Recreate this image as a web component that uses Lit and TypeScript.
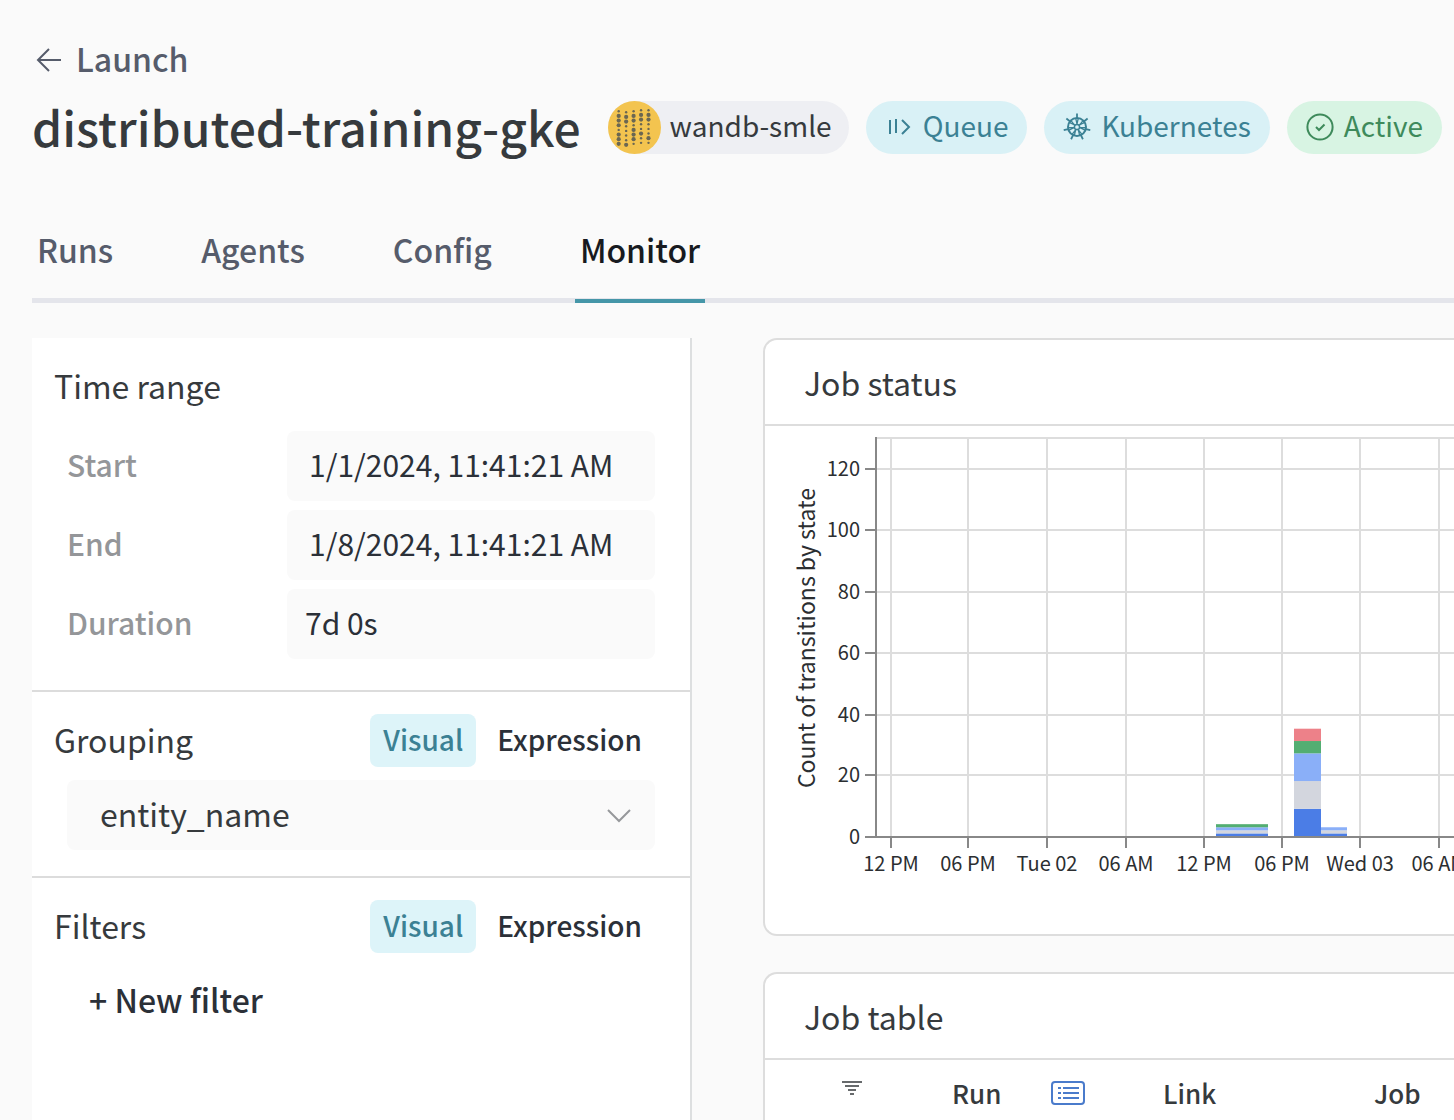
import { LitElement, html, svg, css } from "lit";
import { customElement, property, state } from "lit/decorators.js";
import { classMap } from "lit/directives/class-map.js";

const fontStack = css`"Noto Sans CJK SC", "Noto Sans", sans-serif`;

const backIcon = svg`<svg width="26" height="26" viewBox="0 0 26 26" fill="none" stroke="currentColor" stroke-width="2" aria-hidden="true"><path d="M25 13H2M13 2L2 13l11 11"/></svg>`;

const queueIcon = svg`<svg width="28" height="28" viewBox="0 0 28 28" fill="none" stroke="currentColor" stroke-width="2" aria-hidden="true"><path d="M5 7v14M11 6v14M17 7l7 7-7 7"/></svg>`;

const checkIcon = svg`<svg width="28" height="28" viewBox="0 0 28 28" fill="none" stroke="currentColor" stroke-width="2" aria-hidden="true"><circle cx="14" cy="14" r="12.600"/><path d="M10 14l3 3 5.500-5.500"/></svg>`;

const polar = (r: number, turn: number) => {
  const a = (turn * 2 * Math.PI) / 7 - Math.PI / 2;
  return `${(14 + r * Math.cos(a)).toFixed(2)} ${(14 + r * Math.sin(a)).toFixed(2)}`;
};
const seven = [0, 1, 2, 3, 4, 5, 6];
const helmIcon = svg`<svg width="28" height="28" viewBox="0 0 28 28" fill="none" stroke="currentColor" aria-hidden="true">
  <circle cx="14" cy="14" r="9" stroke-width="2"/>
  <circle cx="14" cy="14" r="2.600" stroke-width="1.500"/>
  ${seven.map((i) => svg`<path stroke-width="1.800" d="M${polar(8, i)}L${polar(13.6, i)}"/><path stroke-width="1.300" d="M${polar(8.5, i - 0.16)}Q${polar(5, i - 0.08)} ${polar(2.8, i)}Q${polar(5, i + 0.08)} ${polar(8.5, i + 0.16)}"/>`)}
</svg>`;

/* Dot sizes of the avatar, one string per column: 2 = large, 1 = small. */
const dotColumns = [
  { top: 10.3, dots: "12221222" },
  { top: 11.3, dots: "12211112" },
  { top: 10.3, dots: "12212221" },
  { top: 9.3, dots: "12211211" },
  { top: 9.3, dots: "12211121" },
];
const avatar = svg`<svg width="53" height="53" viewBox="0 0 53 53" aria-hidden="true">
  <circle cx="26.500" cy="26.500" r="26.500" fill="#f3c44f"/>
  ${dotColumns.map((c, x) =>
    [...c.dots].map((d, y) => svg`<circle cx=${10.7 + x * 7.45} cy=${c.top + y * 4.65} r=${d === "2" ? 2.1 : 1.2} fill="#6b6752"/>`),
  )}
</svg>`;

const filterIcon = svg`<svg width="22" height="16" viewBox="0 0 22 16" fill="none" stroke="currentColor" stroke-width="1.600" aria-hidden="true"><path d="M1 2h20M4 6h14M7 10h8M9 14h4"/></svg>`;

const listIcon = svg`<svg width="34" height="26" viewBox="0 0 34 26" fill="none" stroke="#4a7bcb" stroke-width="2" aria-hidden="true"><rect x="1" y="2" width="32" height="22" rx="3"/><path stroke-width="1.800" d="M7 8h3M12 8h16M7 13h3M12 13h16M7 18h3M12 18h16"/></svg>`;

@customElement("status-chart")
class StatusChart extends LitElement {
  static styles = css`
    :host { display: block; overflow: hidden; }
    .plot { display: block; font-family: ${fontStack}; font-size: 20px; }
    .grid { stroke: #dddddd; stroke-width: 2; }
    .axis { stroke: #888888; stroke-width: 2; }
    .label { fill: #2b2e31; }
    .axis-title { fill: #2b2e31; font-size: 23px; }
  `;

  private xTicks: [number, string][] = [
    [126, "12 PM"], [203, "06 PM"], [282, "Tue 02"], [361, "06 AM"],
    [439, "12 PM"], [517, "06 PM"], [595, "Wed 03"], [674, "06 AM"],
  ];

  private yTicks: [number, number][] = [
    [43, 120], [104, 100], [166, 80], [227, 60], [289, 40], [349, 20], [411, 0],
  ];

  /* Stacks are listed from the axis upwards. */
  private bars = [
    { x: 451, w: 52, stack: [[1, "#4b7de6"], [1, "#d3d6de"], [1, "#8aaff8"], [1, "#53ae72"]] },
    { x: 529, w: 27, stack: [[9, "#4b7de6"], [9, "#d3d6de"], [9, "#8aaff8"], [4, "#53ae72"], [4, "#ed8189"]] },
    { x: 556, w: 26, stack: [[1, "#4b7de6"], [1, "#d3d6de"], [1, "#8aaff8"]] },
  ] as { x: number; w: number; stack: [number, string][] }[];

  private drawStack(bar: { x: number; w: number; stack: [number, string][] }) {
    const unit = 3.08;
    let total = 0;
    return bar.stack.map(([n, fill]) => {
      total += n;
      return svg`<rect x=${bar.x} y=${410.5 - total * unit} width=${bar.w} height=${n * unit} fill=${fill} />`;
    });
  }

  render() {
    return html`<svg class="plot" width="760" height="508" viewBox="0 0 760 508" role="img" aria-label="Job status">
      <path class="grid" d="M111 12H760" />
      ${this.yTicks.map(([y]) => svg`<path class="grid" d="M111 ${y}H760" />`)}
      ${this.xTicks.map(([x]) => svg`<path class="grid" d="M${x} 12V411" />`)}
      ${this.bars.map((b) => this.drawStack(b))}
      <path class="axis" d="M111 11V412M110 411H760" />
      ${this.yTicks.map(([y, n]) => svg`<path class="axis" d="M100 ${y}H111" /><text class="label" x="95" y=${y + 7} text-anchor="end">${n}</text>`)}
      ${this.xTicks.map(([x, t]) => svg`<path class="axis" d="M${x} 411V422" /><text class="label" x=${x} y="445" text-anchor="middle">${t}</text>`)}
      <text class="axis-title" transform="translate(50 212) rotate(-90)" text-anchor="middle">Count of transitions by state</text>
    </svg>`;
  }
}

@customElement("mode-switch")
class ModeSwitch extends LitElement {
  static styles = css`
    :host { display: flex; gap: 8px; }
    .mode {
      height: 53px; padding: 0 13px 3px; border: 0; border-radius: 8px; background: none;
      font-family: ${fontStack}; font-size: 28px; font-weight: 500; color: #2b3038; cursor: pointer;
    }
    .selected { background: #ddf4f9; color: #3b8194; }
  `;
  @state() private mode = "Visual";
  render() {
    return ["Visual", "Expression"].map(
      (m) => html`<button type="button" class=${classMap({ mode: true, selected: m === this.mode })}
        aria-pressed=${m === this.mode} @click=${() => (this.mode = m)}>${m}</button>`,
    );
  }
}

@customElement("app-root")
class AppRoot extends LitElement {
  static styles = css`
    :host {
      display: flex; flex-direction: column; box-sizing: border-box; min-height: 100vh;
      padding: 38px 0 0 32px; overflow: hidden; background: #fafafa; color: #363a3d;
      font-family: ${fontStack}; font-size: 30px; line-height: 44px;
    }
    * { box-sizing: border-box; }
    h1, h2 { margin: 0; font-weight: 400; font-size: 32px; }
    /* The typeface sits low in its line box; this centres it optically. */
    .text { line-height: 40px; padding-bottom: 4px; }
    .back { display: flex; align-items: center; gap: 14px; align-self: flex-start; padding-left: 4px; color: #565c6b; font-size: 32px; font-weight: 500; text-decoration: none; }
    .title-row { display: flex; align-items: center; gap: 17px; padding-top: 11px; white-space: nowrap; }
    .title { font-size: 48px; line-height: 66px; padding-bottom: 2px; font-weight: 500; margin-right: 10px; }
    .pill { display: flex; align-items: center; gap: 10px; height: 53px; padding: 0 19px; border-radius: 27px; flex: none; font-size: 28px; }
    .entity { padding: 0 17px 0 0; gap: 9px; background: #eeeff3; }
    .teal { background: #d9f1f6; color: #3b8194; }
    .green { background: #d8f4e3; color: #3e8a5b; }
    .tabs { display: flex; gap: 78px; margin-top: 66px; border-bottom: 5px solid #e4e5eb; }
    .tab { padding: 0 5px 28px; margin-bottom: -5px; border-bottom: 4px solid transparent; color: #565c6b; font-size: 32px; font-weight: 500; text-decoration: none; }
    .current { color: #171a1f; border-bottom-color: #4596a8; }
    .content { display: grid; grid-template-columns: 660px minmax(0, 1fr); gap: 71px; flex: 1; padding-top: 35px; }
    .sidebar { background: #ffffff; border-right: 2px solid #dddfe0; }
    .section { padding: 22px 35px 26px 22px; }
    .section + .section { border-top: 2px solid #dcdcdc; }
    .section-head { display: flex; align-items: center; justify-content: space-between; height: 53px; }
    .fields { display: grid; grid-template-columns: 220px 1fr; gap: 9px 0; align-items: center; padding: 18px 0 5px 13px; }
    .name { color: #949699; font-weight: 500; }
    .value { width: 100%; height: 70px; border: 0; border-radius: 8px; padding: 0 22px 4px; background: #fafafa; color: #2b3038; font: inherit; line-height: 66px; min-width: 0; }
    .computed { padding: 0 18px 4px; }
    .picker { position: relative; margin: 13px 0 0 13px; }
    .select { display: block; width: 100%; height: 70px; padding: 0 33px 4px; border: 0; border-radius: 8px; background: #fafafa; color: #363a3d; font: inherit; font-size: 32px; appearance: none; }
    .chevron { position: absolute; right: 23px; top: 28px; pointer-events: none; }
    .add { height: 70px; margin: 13px 0 0 35px; padding: 0 0 4px; border: 0; background: none; color: #2b3038; font: inherit; font-size: 32px; font-weight: 500; }
    .panels { display: flex; flex-direction: column; gap: 36px; min-width: 0; }
    .card { border: 2px solid #dddddd; border-right: 0; border-radius: 14px 0 0 14px; background: #ffffff; overflow: hidden; }
    .last { flex: 1; border-bottom: 0; border-bottom-left-radius: 0; }
    .card-title { padding: 20px 39px; border-bottom: 2px solid #dddddd; }
    .jobs { width: 804px; table-layout: fixed; border-collapse: collapse; }
    .lead { width: 171px; }
    .jobs th { padding: 11px 16px 4px; text-align: left; font-weight: 500; font-size: 26px; vertical-align: middle; }
    .jobs .filter { padding: 0 0 4px 76px; line-height: 0; }
    .run { display: flex; align-items: center; gap: 50px; }
    button:focus-visible, a:focus-visible { outline: 2px solid #4596a8; }
  `;

  @property() name = "distributed-training-gke";
  @state() private tab = "Monitor";

  render() {
    return html`
      <a class="back" href="#launch">${backIcon}<span class="text">Launch</span></a>
      <header class="title-row">
        <h1 class="title">${this.name}</h1>
        <span class="pill entity">${avatar}<span class="text">wandb-smle</span></span>
        <span class="pill teal">${queueIcon}<span class="text">Queue</span></span>
        <span class="pill teal">${helmIcon}<span class="text">Kubernetes</span></span>
        <span class="pill green">${checkIcon}<span class="text">Active</span></span>
      </header>
      <nav class="tabs">
        ${["Runs", "Agents", "Config", "Monitor"].map(
          (t) => html`<a href="#${t.toLowerCase()}" class=${classMap({ tab: true, current: t === this.tab })}
            @click=${() => (this.tab = t)}>${t}</a>`,
        )}
      </nav>
      <main class="content">
        <aside class="sidebar">
          <section class="section">
            <div class="section-head"><h2 class="text">Time range</h2></div>
            <div class="fields">
              <label class="name text" for="start">Start</label>
              <input class="value" id="start" type="text" value="1/1/2024, 11:41:21 AM" />
              <label class="name text" for="end">End</label>
              <input class="value" id="end" type="text" value="1/8/2024, 11:41:21 AM" />
              <label class="name text" for="duration">Duration</label>
              <output class="value computed" id="duration">7d 0s</output>
            </div>
          </section>
          <section class="section">
            <div class="section-head"><h2 class="text" id="grouping">Grouping</h2><mode-switch></mode-switch></div>
            <div class="picker">
              <select class="select" aria-labelledby="grouping"><option>entity_name</option></select>
              <svg class="chevron" width="26" height="16" viewBox="0 0 26 16" fill="none" stroke="#96989b" stroke-width="2" aria-hidden="true"><path d="M2 2l11 11L24 2" /></svg>
            </div>
          </section>
          <section class="section">
            <div class="section-head"><h2 class="text">Filters</h2><mode-switch></mode-switch></div>
            <button class="add" type="button">+ New filter</button>
          </section>
        </aside>
        <div class="panels">
          <section class="card">
            <h2 class="card-title">Job status</h2>
            <status-chart></status-chart>
          </section>
          <section class="card last">
            <h2 class="card-title">Job table</h2>
            <table class="jobs">
              <thead>
                <tr>
                  <th class="lead filter" scope="col" aria-label="Filter">${filterIcon}</th>
                  <th scope="col"><span class="run">Run ${listIcon}</span></th>
                  <th scope="col">Link</th>
                  <th scope="col">Job</th>
                </tr>
              </thead>
            </table>
          </section>
        </div>
      </main>
    `;
  }
}
